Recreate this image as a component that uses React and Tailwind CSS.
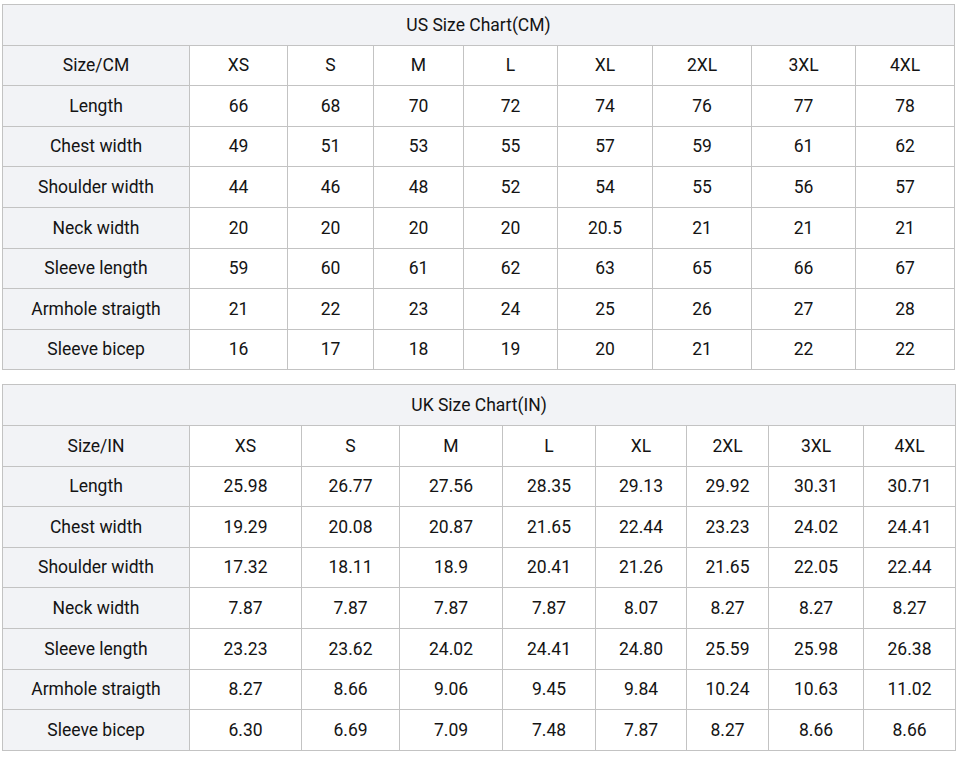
const us = {
  title: "US Size Chart(CM)",
  head: "Size/CM",
  widths: [187, 98, 86, 90, 94, 95, 99, 104, 99],
  rows: [
    ["Length", "66", "68", "70", "72", "74", "76", "77", "78"],
    ["Chest width", "49", "51", "53", "55", "57", "59", "61", "62"],
    ["Shoulder width", "44", "46", "48", "52", "54", "55", "56", "57"],
    ["Neck width", "20", "20", "20", "20", "20.5", "21", "21", "21"],
    ["Sleeve length", "59", "60", "61", "62", "63", "65", "66", "67"],
    ["Armhole straigth", "21", "22", "23", "24", "25", "26", "27", "28"],
    ["Sleeve bicep", "16", "17", "18", "19", "20", "21", "22", "22"],
  ],
};

const uk = {
  title: "UK Size Chart(IN)",
  head: "Size/IN",
  widths: [187, 112, 98, 103, 93, 91, 82, 95, 92],
  rows: [
    ["Length", "25.98", "26.77", "27.56", "28.35", "29.13", "29.92", "30.31", "30.71"],
    ["Chest width", "19.29", "20.08", "20.87", "21.65", "22.44", "23.23", "24.02", "24.41"],
    ["Shoulder width", "17.32", "18.11", "18.9", "20.41", "21.26", "21.65", "22.05", "22.44"],
    ["Neck width", "7.87", "7.87", "7.87", "7.87", "8.07", "8.27", "8.27", "8.27"],
    ["Sleeve length", "23.23", "23.62", "24.02", "24.41", "24.80", "25.59", "25.98", "26.38"],
    ["Armhole straigth", "8.27", "8.66", "9.06", "9.45", "9.84", "10.24", "10.63", "11.02"],
    ["Sleeve bicep", "6.30", "6.69", "7.09", "7.48", "7.87", "8.27", "8.66", "8.66"],
  ],
};

const sizes = ["XS", "S", "M", "L", "XL", "2XL", "3XL", "4XL"];

const SizeTable = ({ chart }) => {
  const { title, head, widths, rows } = chart;

  return (
    <table className="table-fixed border-collapse w-[953px] text-[17.5px] text-[#141414] text-center">
      <colgroup>
        {widths.map((w, i) => (
          <col key={i} style={{ width: w }} />
        ))}
      </colgroup>
      <tbody>
        <tr className="h-[40.6px]">
          <td colSpan={9} className="border border-[#c3c3c3] bg-[#f2f3f6] p-0">
            {title}
          </td>
        </tr>
        <tr className="h-[40.6px]">
          <td className="border border-[#c3c3c3] bg-[#f2f3f6] p-0">{head}</td>
          {sizes.map((s) => (
            <td key={s} className="border border-[#c3c3c3] bg-white p-0">
              {s}
            </td>
          ))}
        </tr>
        {rows.map((row) => (
          <tr key={row[0]} className="h-[40.6px]">
            {row.map((cell, i) => (
              <td
                key={i}
                className={`border border-[#c3c3c3] p-0 ${i === 0 ? "bg-[#f2f3f6]" : "bg-white"}`}
              >
                {cell}
              </td>
            ))}
          </tr>
        ))}
      </tbody>
    </table>
  );
};

export default function App() {
  return (
    <div className="w-[960px] h-[762px] bg-white pt-[4px] pl-[2px] font-['Roboto',sans-serif]">
      <div className="flex flex-col gap-[14px]">
        <SizeTable chart={us} />
        <SizeTable chart={uk} />
      </div>
    </div>
  );
}
